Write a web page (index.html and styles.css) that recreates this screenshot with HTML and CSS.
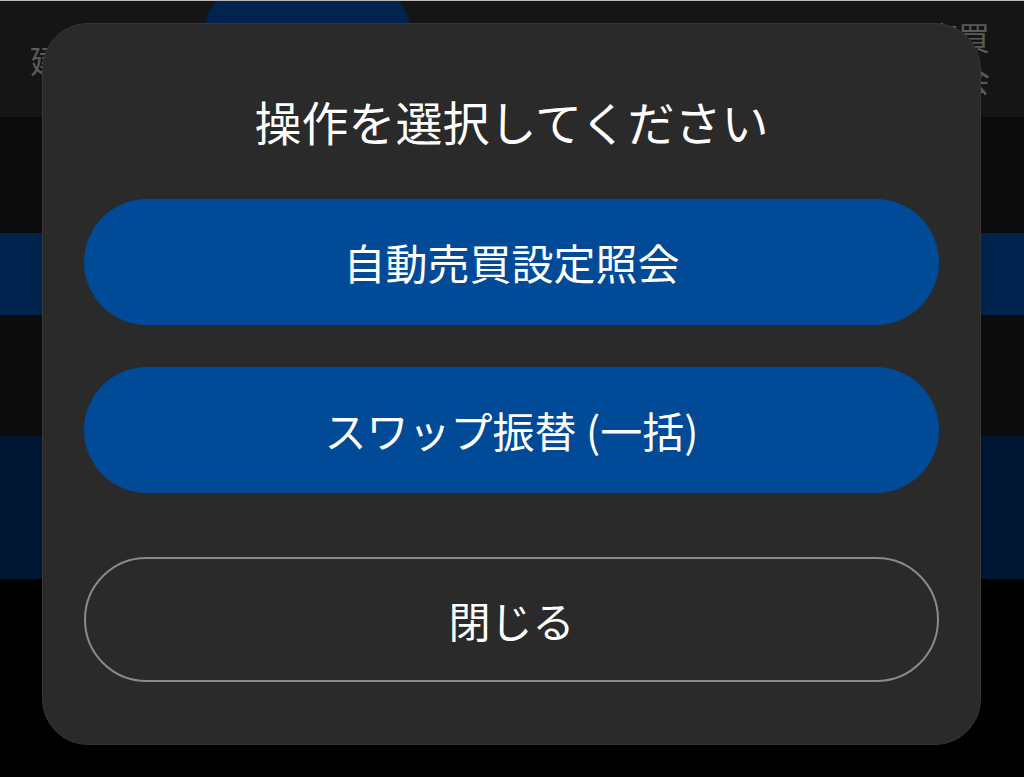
FILE: index.html
```html
<!DOCTYPE html>
<html lang="ja">
<head>
<meta charset="utf-8">
<title>操作を選択してください</title>
<link rel="stylesheet" href="styles.css">
</head>
<body>
<div class="page">
  <div class="topline"></div>
  <header class="header">
    <div class="header-left">建玉</div>
    <div class="tab-pill"></div>
    <div class="header-right">自動売買<br>照会</div>
  </header>
  <div class="row row-dark r1"></div>
  <div class="row row-blue r2"></div>
  <div class="row row-dark r3"></div>
  <div class="row row-navy r4"></div>
  <div class="row-rest"></div>

  <div class="modal">
    <div class="modal-title">操作を選択してください</div>
    <button class="btn btn-primary">自動売買設定照会</button>
    <button class="btn btn-primary btn-second">スワップ振替 (一括)</button>
    <button class="btn btn-outline">閉じる</button>
  </div>
</div>
</body>
</html>
```

FILE: styles.css
```css
html, body {
  margin: 0;
  padding: 0;
  background: #000;
}
body {
  font-family: "Noto Sans CJK JP", "Noto Sans", sans-serif;
  color: #fff;
}
.page {
  position: relative;
  width: 1024px;
  height: 777px;
  overflow: hidden;
  display: flex;
  flex-direction: column;
}
.topline {
  height: 1px;
  background: #b8b8b8;
}
.header {
  height: 116px;
  background: #151515;
  display: flex;
  align-items: center;
  justify-content: space-between;
  padding: 0 34px 0 30px;
  position: relative;
  overflow: hidden;
}
.header-left {
  font-size: 32px;
  line-height: 1;
  color: #5a5a5a;
}
.header-right {
  font-size: 32px;
  line-height: 42px;
  color: #5a5a5a;
  text-align: right;
  margin-top: -4px;
}
.tab-pill {
  position: absolute;
  left: 205px;
  top: -12px;
  width: 205px;
  height: 80px;
  border-radius: 40px;
  background: #00234f;
}
.row { flex: none; }
.row-dark { background: #0c0c0c; }
.row-blue { background: #00234e; }
.row-navy { background: #001733; }
.r1 { height: 116px; }
.r2 { height: 82px; }
.r3 { height: 121px; }
.r4 { height: 143px; }
.row-rest { flex: 1; background: #000; }

.modal {
  position: absolute;
  left: 42px;
  top: 23px;
  width: 939px;
  height: 722px;
  box-sizing: border-box;
  background: #2a2a2a;
  border: 1px solid #363636;
  border-radius: 46px;
  padding: 73px 41px 62px;
  display: flex;
  flex-direction: column;
}
.modal-title {
  font-size: 47px;
  line-height: 47px;
  font-weight: 400;
  text-align: center;
  margin-bottom: 55px;
}
.btn {
  font-family: inherit;
  font-size: 42px;
  line-height: 1;
  color: #fff;
  height: 126px;
  border-radius: 63px;
  border: none;
  display: flex;
  align-items: center;
  justify-content: center;
  padding: 0;
  width: 100%;
  flex: none;
}
.btn-primary {
  background: #004a98;
}
.btn-second {
  margin-top: 42px;
}
.btn-outline {
  margin-top: 64px;
  height: 125px;
  background: transparent;
  border: 2px solid #8a8a8a;
}
```
